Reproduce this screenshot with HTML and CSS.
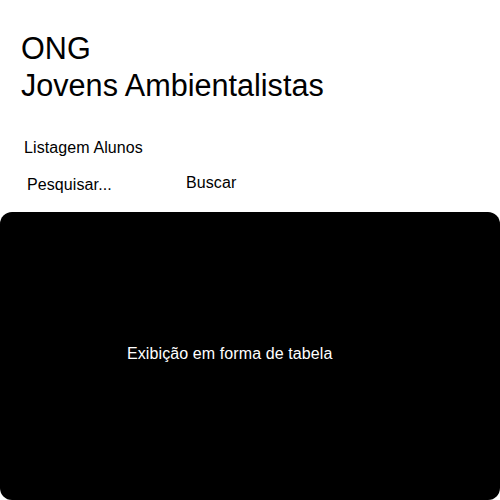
FILE: index.html
```html
<!DOCTYPE html>
<html>
<head>
<meta charset="utf-8">
<link rel="stylesheet" href="styles.css">
</head>
<body>
<header class="header">
  <h1 class="title">ONG<br>Jovens Ambientalistas</h1>
</header>
<main class="main">
  <h2 class="subtitle">Listagem Alunos</h2>
  <div class="search">
    <span class="search-input">Pesquisar...</span>
    <span class="search-btn">Buscar</span>
  </div>
  <section class="table">
    <p class="table-text">Exibição em forma de tabela</p>
  </section>
</main>
</body>
</html>
```
FILE: styles.css
```css
html, body {
  margin: 0;
  padding: 0;
  background: #fff;
  font-family: "Liberation Sans", Arial, sans-serif;
  color: #000;
}
.header {
  padding: 30px 0 0 21px;
}
.title {
  margin: 0;
  font-size: 30.6px;
  font-weight: normal;
  line-height: 37px;
}
.main {
  display: flex;
  flex-direction: column;
}
.subtitle {
  margin: 35px 0 0 24px;
  font-size: 16px;
  font-weight: normal;
  line-height: 18px;
  letter-spacing: 0.1px;
}
.search {
  display: flex;
  margin: 18px 0 0 0;
  font-size: 16px;
  line-height: 18px;
  letter-spacing: 0.1px;
}
.search-input {
  margin: 1px 0 0 27px;
  width: 159px;
}
.search-btn {
  margin-top: -1px;
}
.table {
  margin-top: 18px;
  height: 288px;
  box-sizing: border-box;
  background: #000;
  border-radius: 12px;
  display: flex;
  align-items: center;
  padding: 0 0 4px 127px;
}
.table-text {
  margin: 0;
  color: #fff;
  font-size: 16px;
  line-height: 18px;
  letter-spacing: 0.1px;
}
```
